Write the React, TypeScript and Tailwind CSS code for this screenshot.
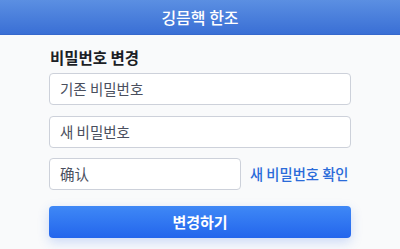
import React from "react";

export default function App() {
  const font = { fontFamily: '"Noto Sans CJK KR", "Noto Sans CJK SC", sans-serif' };
  return (
    <div className="w-[400px] h-[249px] bg-[#f9fafb] overflow-hidden" style={font}>
      <div className="h-[35px] bg-gradient-to-b from-[#5b8fe2] to-[#3a6fd5] border-b border-[#3668cc] flex items-center justify-center">
        <span className="text-white text-[16px] font-medium leading-none">깅믐핵 한조</span>
      </div>
      <div className="px-[49px] pt-[10px] flex flex-col">
        <div className="h-[24px] leading-[24px] text-[15.5px] font-bold text-[#1c1f26] pl-[1px] mb-[4px]">비밀번호 변경</div>
        <div className="h-[32px] bg-white border border-[#cdd1da] rounded-[4px] flex items-center pl-[10px] text-[14.5px] text-[#4a4f5e]">
          기존 비밀번호
        </div>
        <div className="mt-[11px] h-[32px] bg-white border border-[#cdd1da] rounded-[4px] flex items-center pl-[10px] text-[14.5px] text-[#4a4f5e]">
          새 비밀번호
        </div>
        <div className="mt-[10px] h-[32px] flex items-center gap-[9px]">
          <div className="w-[192px] shrink-0 h-[32px] bg-white border border-[#cdd1da] rounded-[4px] flex items-center pl-[10px] text-[14.5px] text-[#4a4f5e]" style={{ fontFamily: '"Noto Sans CJK SC", sans-serif' }}>
            确认
          </div>
          <span className="whitespace-nowrap text-[14.3px] text-[#2a6bd9] font-medium">새 비밀번호 확인</span>
        </div>
        <div className="mt-[16px] h-[32px] rounded-[4px] bg-gradient-to-b from-[#3f88f6] to-[#2465ec] shadow-[0_4px_12px_rgba(40,100,230,0.22)] flex items-center justify-center">
          <span className="text-white text-[15px] font-bold">변경하기</span>
        </div>
      </div>
    </div>
  );
}
